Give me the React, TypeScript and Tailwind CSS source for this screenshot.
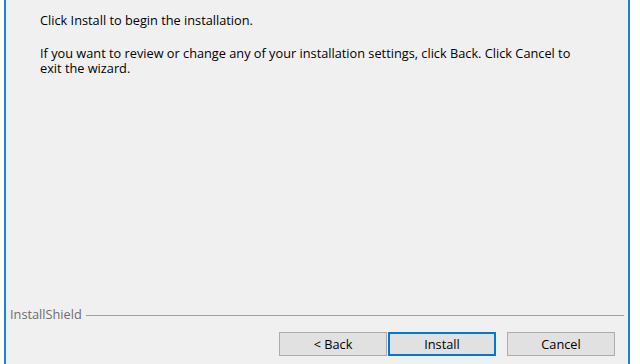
import React from 'react';

const font = { fontFamily: '"Open Sans", "Noto Sans", sans-serif' };

const WizardButton: React.FC<{ label: string; primary?: boolean }> = ({ label, primary }) => (
  <button
    className={`h-[24px] w-[108px] text-[12.75px] leading-none text-black bg-[#e1e1e1] ${
      primary ? 'border-2 border-[#0078d7]' : 'border border-[#adadad]'
    }`}
  >
    {label}
  </button>
);

export default function App() {
  return (
    <div className="h-[364px] w-[640px] bg-white overflow-hidden" style={font}>
      <div className="ml-1 w-[626px] h-full bg-[#f0f0f0] border-l-2 border-r-2 border-[#1883d7] flex flex-col">
        <div className="pl-[34px] pt-[13px] pr-[38px] text-[12.75px] leading-[15px] text-black">
          <p>Click Install to begin the installation.</p>
          <p className="mt-[18px]">
            If you want to review or change any of your installation settings, click Back. Click Cancel to
            exit the wizard.
          </p>
        </div>

        <div className="flex-1" />

        <div className="flex items-center gap-[4px] pl-[4px] pr-[4px] text-[12.75px] leading-[15px] text-[#6d6d6d]">
          <span>InstallShield</span>
          <div className="flex-1 h-px bg-[#a0a0a0] mt-[2px]" />
        </div>

        <div className="flex justify-end items-center mt-[10px] mb-[8px] pr-[13px]">
          <div className="flex gap-[1px]">
            <WizardButton label="< Back" />
            <WizardButton label="Install" primary />
          </div>
          <div className="w-[11px]" />
          <WizardButton label="Cancel" />
        </div>
      </div>
    </div>
  );
}
